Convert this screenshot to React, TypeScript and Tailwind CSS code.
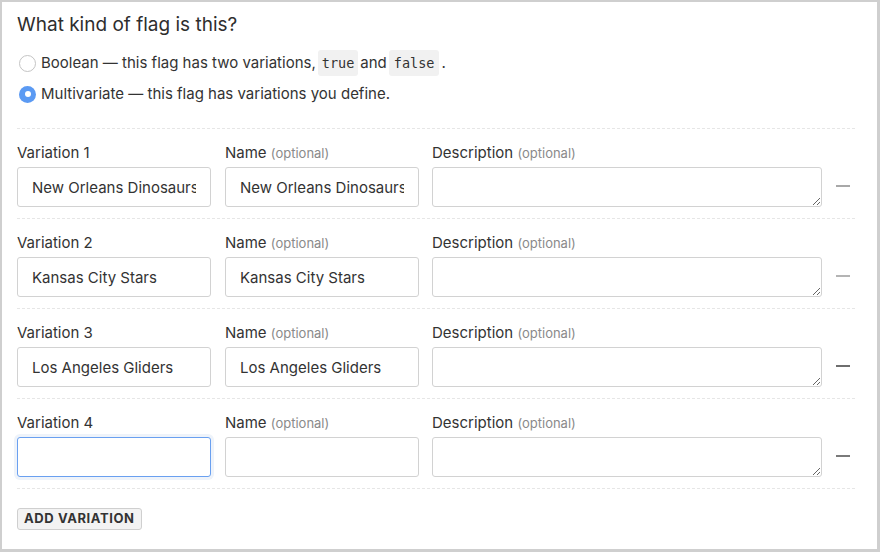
import React from "react";

type Variation = {
  value: string;
  name: string;
  removeTone: string;
  focused?: boolean;
};

const variations: Variation[] = [
  { value: "New Orleans Dinosaurs", name: "New Orleans Dinosaurs", removeTone: "bg-[#a8a8a8]" },
  { value: "Kansas City Stars", name: "Kansas City Stars", removeTone: "bg-[#b4b4b4]" },
  { value: "Los Angeles Gliders", name: "Los Angeles Gliders", removeTone: "bg-[#6e6e6e]" },
  { value: "", name: "", removeTone: "bg-[#7a7a7a]", focused: true },
];

const inputBase =
  "h-10 w-[194px] rounded-[3px] border bg-white px-[14px] text-[15px] text-[#333] outline-none";

const monoFont = { fontFamily: "'DejaVu Sans Mono', 'Liberation Mono', monospace" };

const App = () => {
  return (
    <div
      className="h-[552px] w-[880px] overflow-hidden border-t-2 border-l-2 border-r-[3px] border-b-[3px] border-[#cfcfcf] bg-white text-[#333]"
      style={{ fontFamily: "Inter, 'Open Sans', 'Liberation Sans', sans-serif" }}
    >
      <div className="pl-[15px] pr-[22px] pt-[11px]">
        <h1 className="text-[19px] leading-[24px] font-normal text-[#2e2e2e]">What kind of flag is this?</h1>

        <div className="mt-[15px] flex flex-col gap-[9px] text-[15px]">
          <label className="flex h-[22px] items-center">
            <span className="ml-[2px] mr-[5px] h-[17px] w-[17px] rounded-full border border-[#c4c4c4] bg-white" />
            <span>Boolean — this flag has two variations,</span>
            <code className="mx-[2px] rounded-[3px] bg-[#f1f1f1] px-[4px] py-[3px] text-[13.5px] text-[#333]" style={monoFont}>
              true
            </code>
            <span>and</span>
            <code className="mx-[2px] rounded-[3px] bg-[#f1f1f1] px-[5px] py-[3px] text-[13.5px] text-[#333]" style={monoFont}>
              false
            </code>
            <span>.</span>
          </label>
          <label className="flex h-[22px] items-center">
            <span className="ml-[2px] mr-[5px] flex h-[17px] w-[17px] items-center justify-center rounded-full bg-[#5b9af3]">
              <span className="h-[6px] w-[6px] rounded-full bg-white" />
            </span>
            <span>Multivariate — this flag has variations you define.</span>
          </label>
        </div>

        <div className="mt-[23px] w-[838px]">
          {variations.map((v, i) => (
            <div key={i} className="border-t border-dashed border-[#e6e6e6] pt-[14px] pb-[11px]">
              <div className="flex items-end">
                <div className="flex flex-col">
                  <span className="mb-[4px] text-[15px] leading-[20px]">Variation {i + 1}</span>
                  <input
                    readOnly
                    value={v.value}
                    className={`${inputBase} ${
                      v.focused
                        ? "border-[#6aa0f0] shadow-[0_0_0_3px_#eef3fa]"
                        : "border-[#d2d2d2]"
                    }`}
                  />
                </div>
                <div className="ml-[14px] flex flex-col">
                  <span className="mb-[4px] text-[15px] leading-[20px]">
                    Name <span className="text-[13px] text-[#8a8a8a]">(optional)</span>
                  </span>
                  <input readOnly value={v.name} className={`${inputBase} border-[#d2d2d2]`} />
                </div>
                <div className="ml-[13px] flex flex-col">
                  <span className="mb-[4px] text-[15px] leading-[20px]">
                    Description <span className="text-[13px] text-[#8a8a8a]">(optional)</span>
                  </span>
                  <textarea
                    readOnly
                    className="block h-10 w-[390px] rounded-[3px] border border-[#d2d2d2] bg-white px-2 text-[15px] outline-none"
                  />
                </div>
                <button className="mb-[19px] ml-[14px] flex h-[4px] w-[14px] items-center">
                  <span className={`block h-[2px] w-[14px] ${v.removeTone}`} />
                </button>
              </div>
            </div>
          ))}
          <div className="border-t border-dashed border-[#e6e6e6] pt-[16px]">
            <button className="h-[22px] rounded-[3px] border border-[#cfcfcf] bg-[#f3f3f3] px-[6px] text-[13px] font-bold tracking-[0.045em] text-[#333]">
              ADD VARIATION
            </button>
          </div>
        </div>
      </div>
    </div>
  );
};

export default App;
